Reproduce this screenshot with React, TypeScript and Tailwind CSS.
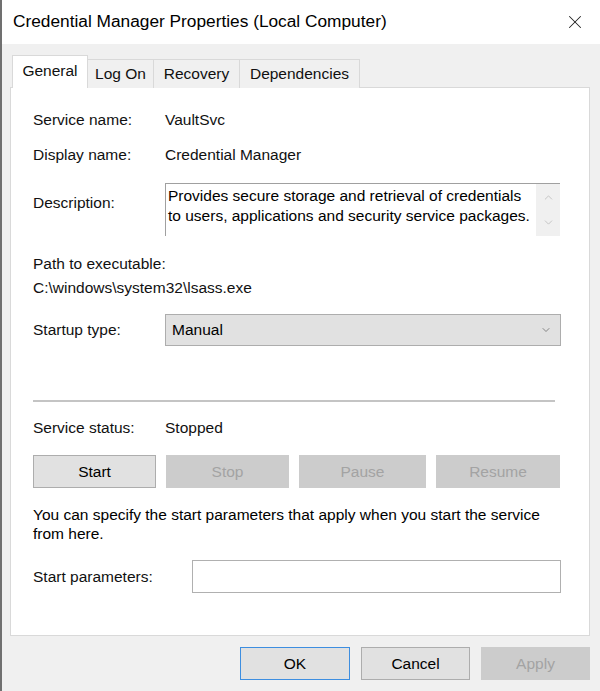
import { X, ChevronDown, ChevronUp } from "lucide-react";

const font = { fontFamily: '"Liberation Sans", Arial, sans-serif' };

function Field({ label, value }: { label: string; value: string }) {
  return (
    <div className="flex h-[20px] items-center">
      <div className="w-[132px]">{label}</div>
      <div>{value}</div>
    </div>
  );
}

function WinButton({
  label,
  width,
  disabled = false,
  focused = false,
}: {
  label: string;
  width: number;
  disabled?: boolean;
  focused?: boolean;
}) {
  const cls = disabled
    ? "bg-[#cccccc] border-[#cccccc] text-[#a3a3a3]"
    : focused
      ? "bg-[#e1e1e1] border-[#3d8ee0] text-black"
      : "bg-[#e1e1e1] border-[#adadad] text-black";
  return (
    <div
      className={`flex h-[33px] shrink-0 items-center justify-center border ${cls}`}
      style={{ width }}
    >
      {label}
    </div>
  );
}

export default function App() {
  const tabs = [
    { name: "General", w: 76 },
    { name: "Log On", w: 66 },
    { name: "Recovery", w: 86 },
    { name: "Dependencies", w: 120 },
  ];

  return (
    <div
      className="flex h-[691px] w-[600px] flex-col border-l-2 border-[#707070] bg-[#f0f0f0] text-[15.5px] text-[#111]"
      style={font}
    >
      {/* Title bar */}
      <div className="flex h-[44px] shrink-0 items-center justify-between bg-white pl-[11px] pr-[14px]">
        <span className="text-[17.3px] text-black">
          Credential Manager Properties (Local Computer)
        </span>
        <X size={22} strokeWidth={1.1} className="text-[#222]" />
      </div>

      {/* Tabs */}
      <div className="relative z-10 mt-[11px] flex h-[33px] items-end pl-[10px]">
        {tabs.map((t, i) =>
          i === 0 ? (
            <div
              key={t.name}
              className="flex h-[33px] items-center justify-center border-x border-t border-[#d9d9d9] bg-white pb-[2px]"
              style={{ width: t.w }}
            >
              {t.name}
            </div>
          ) : (
            <div
              key={t.name}
              className="flex h-[29px] items-center justify-center border-r border-t border-[#d9d9d9] bg-[#f0f0f0]"
              style={{ width: t.w }}
            >
              {t.name}
            </div>
          ),
        )}
      </div>

      {/* Panel */}
      <div className="-mt-px ml-[8px] flex h-[549px] w-[580px] flex-col border border-[#d9d9d9] bg-white pl-[22px]">
        <div className="mt-[22px]">
          <Field label="Service name:" value="VaultSvc" />
        </div>
        <div className="mt-[15px]">
          <Field label="Display name:" value="Credential Manager" />
        </div>

        {/* Description */}
        <div className="mt-[18px] flex">
          <div className="w-[132px] pt-[8px]">Description:</div>
          <div className="flex h-[53px] w-[395px] border-l border-t border-[#a0a0a0]">
            <div className="flex-1 pl-[2px] pt-[2px] leading-[20px] text-black">
              Provides secure storage and retrieval of credentials
              <br />
              to users, applications and security service packages.
            </div>
            <div className="flex w-[24px] flex-col items-center justify-center gap-[12px] bg-[#f0f0f0] text-[#b8b8b8]">
              <ChevronUp size={13} strokeWidth={1.4} />
              <ChevronDown size={13} strokeWidth={1.4} />
            </div>
          </div>
        </div>

        <div className="mt-[18px] flex h-[20px] items-center">Path to executable:</div>
        <div className="mt-[4px] flex h-[20px] items-center">
          C:\windows\system32\lsass.exe
        </div>

        {/* Startup type */}
        <div className="mt-[16px] flex items-center">
          <div className="w-[132px]">Startup type:</div>
          <div className="flex h-[32px] w-[396px] items-center justify-between border border-[#adadad] bg-[#e1e1e1] pl-[6px] pr-[8px] text-black">
            <span>Manual</span>
            <ChevronDown size={12} strokeWidth={1.5} className="text-[#666]" />
          </div>
        </div>

        <div className="mt-[54px] h-[2px] w-[522px] bg-[#c4c4c4]" />

        <div className="mt-[16px]">
          <Field label="Service status:" value="Stopped" />
        </div>

        <div className="mt-[17px] flex gap-[10px]">
          <WinButton label="Start" width={123} />
          <WinButton label="Stop" width={123} disabled />
          <WinButton label="Pause" width={127} disabled />
          <WinButton label="Resume" width={124} disabled />
        </div>

        <div className="mt-[17px] leading-[19px] text-black">
          You can specify the start parameters that apply when you start the service
          <br />
          from here.
        </div>

        <div className="mt-[17px] flex items-center">
          <div className="w-[159px]">Start parameters:</div>
          <div className="h-[33px] w-[369px] border border-[#b0b0b0] bg-white" />
        </div>
      </div>

      {/* Dialog buttons */}
      <div className="mt-[11px] flex justify-end gap-[11px] pr-[10px]">
        <WinButton label="OK" width={110} focused />
        <WinButton label="Cancel" width={109} />
        <WinButton label="Apply" width={109} disabled />
      </div>
    </div>
  );
}
